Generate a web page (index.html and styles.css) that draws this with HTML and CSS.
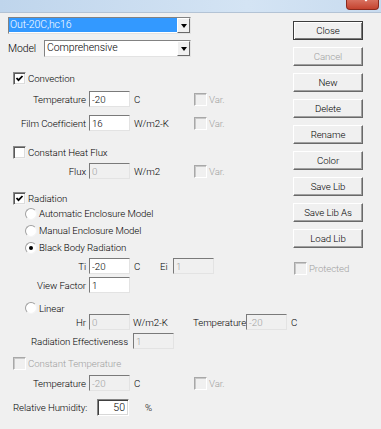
FILE: index.html
```html
<!DOCTYPE html>
<html lang="en">
<head>
<meta charset="UTF-8">
<title>Boundary Condition Library</title>
<link rel="stylesheet" href="styles.css">
</head>
<body>
<div class="caption">
  <div class="close-x">
    <svg width="33" height="10" viewBox="0 0 33 10"><path d="M17 -4 L20 2 M23 -4 L20 2" stroke="#fff" stroke-width="1.6" fill="none"/></svg>
  </div>
</div>
<div class="dialog">
  <div class="left">
    <!-- library entry -->
    <div class="combo wide">
      <div class="combo-text sel">Out-20C,hc16</div>
      <div class="drop"><span class="tri"></span></div>
    </div>
    <div class="model-row">
      <span class="mlabel">Model</span>
      <div class="combo model">
        <div class="combo-text">Comprehensive</div>
        <div class="drop"><span class="tri"></span></div>
      </div>
    </div>

    <!-- convection -->
    <div class="check-row r-conv"><span class="cb"><svg viewBox="0 0 11 11"><polyline points="2.5,5 4.5,7.2 8.5,3" /></svg></span>Convection</div>
    <div class="field r-temp">
      <span class="lbl">Temperature</span><input class="edit" value="-20" readonly>
      <span class="unit">C</span><span class="cb dis"></span><span class="dimtext">Var.</span>
    </div>
    <div class="field r-film">
      <span class="lbl">Film Coefficient</span><input class="edit" value="16" readonly>
      <span class="unit">W/m2-K</span><span class="cb dis"></span><span class="dimtext">Var.</span>
    </div>

    <!-- heat flux -->
    <div class="check-row r-chf"><span class="cb"></span>Constant Heat Flux</div>
    <div class="field r-flux">
      <span class="lbl">Flux</span><input class="edit" value="0" disabled>
      <span class="unit">W/m2</span><span class="cb dis"></span><span class="dimtext">Var.</span>
    </div>

    <!-- radiation -->
    <div class="check-row r-rad"><span class="cb"><svg viewBox="0 0 11 11"><polyline points="2.5,5 4.5,7.2 8.5,3" /></svg></span>Radiation</div>
    <div class="radio-row"><span class="rb"></span>Automatic Enclosure Model</div>
    <div class="radio-row"><span class="rb"></span>Manual Enclosure Model</div>
    <div class="radio-row"><span class="rb on"></span>Black Body Radiation</div>
    <div class="field r-ti">
      <span class="lbl">Ti</span><input class="edit" value="-20" readonly>
      <span class="unit short">C</span><span class="ei">Ei</span><input class="edit" value="1" disabled>
    </div>
    <div class="field r-vf">
      <span class="lbl">View Factor</span><input class="edit" value="1" readonly>
    </div>
    <div class="radio-row r-lin"><span class="rb"></span>Linear</div>
    <div class="field r-hr">
      <span class="lbl">Hr</span><input class="edit" value="0" disabled>
      <span class="unit hr-unit">W/m2-K</span><span class="tlabel">Temperature</span><input class="edit" value="-20" disabled>
      <span class="unit">C</span>
    </div>
    <div class="field r-eff">
      <span class="lbl eff">Radiation Effectiveness</span><input class="edit" value="1" disabled>
    </div>

    <!-- constant temperature -->
    <div class="check-row r-ct dimtext"><span class="cb dis"></span>Constant Temperature</div>
    <div class="field r-temp2">
      <span class="lbl">Temperature</span><input class="edit" value="-20" disabled>
      <span class="unit">C</span><span class="cb dis"></span><span class="dimtext">Var.</span>
    </div>

    <div class="rh-row">
      <span class="rh-label">Relative Humidity:</span><input class="edit rh" value="50" readonly><span class="pct">%</span>
    </div>
  </div>

  <div class="buttons">
    <div class="btn default">Close</div>
    <div class="btn off">Cancel</div>
    <div class="btn">New</div>
    <div class="btn">Delete</div>
    <div class="btn">Rename</div>
    <div class="btn">Color</div>
    <div class="btn">Save Lib</div>
    <div class="btn">Save Lib As</div>
    <div class="btn">Load Lib</div>
    <div class="check-row protected dimtext"><span class="cb dis"></span>Protected</div>
  </div>
</div>
</body>
</html>
```

FILE: styles.css
```css
body{
margin:0;background:#f0f0f0;
font-family:Roboto,"Liberation Sans",Arial,sans-serif;font-weight:300;font-size:9.7px;letter-spacing:-0.1px;color:#000;
width:381px;height:429px;overflow:hidden;
}
/* window caption edge */
.caption{
height:12px;border-bottom:1px solid #b3c3d5;
background:linear-gradient(to right,#bfd5ec,#d4e4f4 65%,#c8dbef);
display:flex;justify-content:flex-end;padding-right:2px;
}
.close-x{
width:33px;height:10px;box-sizing:border-box;
background:linear-gradient(#d8705f,#c4432f);
border:1px solid #8b2a1e;border-top:none;border-radius:0 0 4px 4px;
}
.close-x svg{display:block;margin:-1px 0 0 -1px}

.dialog{display:flex}
.left{width:293px;padding-top:4px;flex-shrink:0}
.buttons{width:70px;padding-top:8px;flex-shrink:0}

/* combo boxes */
.combo{
display:flex;height:17px;box-sizing:border-box;background:#fff;
border:1px solid;border-color:#828282 #e3e3e3 #e3e3e3 #828282;
}
.combo.wide{width:183px;margin-left:8px}
.combo.model{width:147px}
.combo-text{flex:1;line-height:14px;padding-left:2px;height:14px;font-size:10.5px}
.combo-text.sel{background:#3399ff;color:#fff;padding-left:1px}
.drop{
width:13px;height:15px;box-sizing:border-box;background:#f0f0f0;
border:1px solid;border-color:#fff #696969 #696969 #fff;
display:flex;align-items:center;justify-content:center;
}
.tri{width:0;height:0;border-left:3.5px solid transparent;border-right:3.5px solid transparent;border-top:4px solid #000}
.model-row{display:flex;align-items:center;height:17px;margin-top:6px;padding-left:8px}
.mlabel{width:36px;font-size:10.5px}

/* check boxes and radios */
.check-row{display:flex;align-items:center;height:13px;padding-left:13px}
.cb{
width:13px;height:13px;box-sizing:border-box;background:#fff;flex-shrink:0;margin-right:2px;
border:1px solid;border-color:#8a8a8a #f4f4f4 #f4f4f4 #8a8a8a;
box-shadow:inset 1px 1px 0 #5a5a5a,inset -1px -1px 0 #dcdcdc;
}
.cb svg{display:block;width:11px;height:11px}
.cb polyline{fill:none;stroke:#000;stroke-width:1.8}
.cb.dis{background:#f0f0f0;border-color:#a8a8a8 #fff #fff #a8a8a8;box-shadow:inset 1px 1px 0 #c8c8c8}
.dimtext{color:#a0a0a0}

.radio-row{display:flex;align-items:center;height:17px;padding-left:25px}
.rb{
width:12px;height:12px;box-sizing:border-box;border-radius:50%;background:#fff;margin-right:2px;
border:1px solid;border-color:#a0a0a0 #f4f4f4 #f4f4f4 #a0a0a0;
display:flex;align-items:center;justify-content:center;
}
.rb.on::after{content:"";width:4px;height:4px;border-radius:50%;background:#000}

/* labelled fields */
.field{display:flex;align-items:center;height:16px}
.lbl{width:89px;box-sizing:border-box;padding-right:3px;text-align:right;flex-shrink:0}
.lbl.eff{width:133px;padding-right:5px}
.edit{
box-sizing:border-box;width:41px;height:16px;margin:0;padding:0 2px;
font:inherit;color:#000;background:#fff;outline:none;
border:1px solid;border-color:#7a7a7a #e3e3e3 #e3e3e3 #7a7a7a;
}
.edit:disabled{background:#f0f0f0;color:#a0a0a0}
.unit{width:60px;margin-left:4px;flex-shrink:0}
.unit.short{width:26px}
.unit.hr-unit{margin-left:3px}
.ei{width:13px}
.tlabel{width:61px}

.r-conv{margin-top:15px}
.r-temp{margin-top:6px}
.r-film{margin-top:8px}
.r-chf{margin-top:15px}
.r-flux{margin-top:4px}
.r-rad{margin-top:13px}
.r-ti{margin-top:2px}
.r-vf{margin-top:3px}
.r-lin{margin-top:9px;height:12px}
.r-eff{margin-top:3px}
.r-ct{margin-top:8px}
.r-temp2{margin-top:5px}

.rh-row{display:flex;align-items:center;height:17px;margin-top:8px;padding-left:13px}
.rh-label{width:84px}
.edit.rh{
width:32px;height:17px;text-align:right;padding-right:3px;font-size:10.5px;
border-color:#838383 #fff #fff #838383;box-shadow:inset 1px 1px 0 #404040,inset -1px -1px 0 #d8d8d8;
}
.pct{margin-left:16px}

/* buttons */
.btn{
height:19px;box-sizing:border-box;margin-bottom:7px;
border:1px solid;border-color:#fff #696969 #696969 #fff;
box-shadow:inset -1px -1px 0 #a0a0a0;
text-align:center;line-height:17px;
}
.btn.default{border-color:#3c3c3c;box-shadow:inset 1px 1px 0 #fff,inset -1px -1px 0 #7a7a7a}
.btn.off{color:#a0a0a0}
.check-row.protected{padding-left:1px;margin-top:14px}
```
